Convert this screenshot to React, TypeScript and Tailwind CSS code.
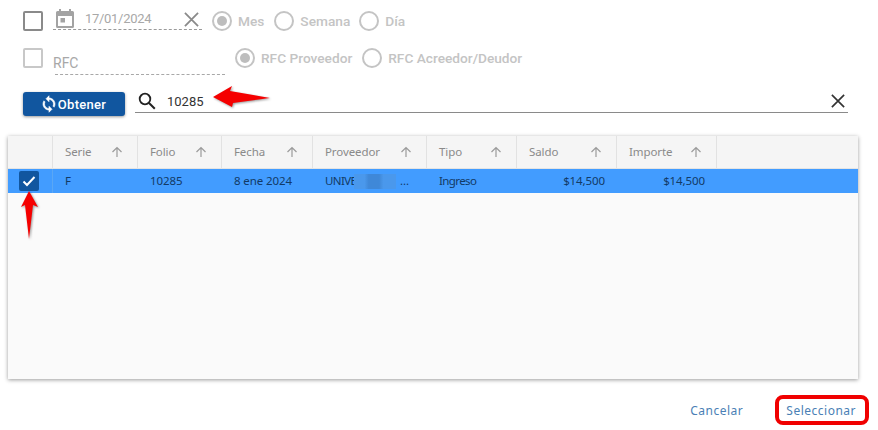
import React from "react";

const X = ({ c, s = 16 }: { c: string; s?: number }) => (
  <svg width={s} height={s} viewBox="0 0 16 16" className="shrink-0">
    <path d="M1 1L15 15M15 1L1 15" stroke={c} strokeWidth="1.9" fill="none" />
  </svg>
);

const Radio = ({ on, label, ml = "" }: { on?: boolean; label: string; ml?: string }) => (
  <div className={`flex items-center ${ml}`}>
    <span className="flex h-5 w-5 items-center justify-center rounded-full border-2 border-[#c4c4c4]">
      {on && <span className="h-[10px] w-[10px] rounded-full bg-[#bdbdbd]" />}
    </span>
    <span className="ml-[6px] -translate-y-[0.5px] text-[13.700px] font-medium leading-5 text-[#c4c4c4]">{label}</span>
  </div>
);

const cols: [string, string][] = [
  ["Serie", "w-[85px]"],
  ["Folio", "w-[84px]"],
  ["Fecha", "w-[91px]"],
  ["Proveedor", "w-[114px]"],
  ["Tipo", "w-[90px]"],
  ["Saldo", "w-[100px]"],
  ["Importe", "w-[100px]"],
];

const Up = () => (
  <svg width="12" height="12" viewBox="0 0 12 12" className="shrink-0">
    <path d="M6 11V1.500M1.500 6L6 1.500L10.500 6" stroke="#9b9b9b" strokeWidth="1.200" fill="none" />
  </svg>
);

const Cell = ({ w, right, children }: { w: string; right?: boolean; children: React.ReactNode }) => (
  <div className={`${w} flex items-center px-3 ${right ? "justify-end" : ""}`}>{children}</div>
);

export default function App() {
  return (
    <div className="relative h-[430px] w-[878px] overflow-hidden bg-white font-['Roboto',sans-serif]">
      <div className="flex h-[136px] flex-col pl-[23px] pr-[30px]">
        {/* row 1 */}
        <div className="mt-[11px] flex h-5 items-center">
          <span className="h-5 w-5 rounded-[2px] border-2 border-[#8a8a8a]" />
          <div className="ml-[10px] flex h-5 w-[149px] -translate-y-px items-center border-b border-dashed border-[#9a9a9a]">
            <svg width="18" height="20" viewBox="0 0 18 20" className="ml-[3px] -translate-y-[2px]">
              <path d="M3 1h2v2h8V1h2v2h1.500A1.500 1.500 0 0 1 18 4.500v14a1.500 1.500 0 0 1-1.500 1.500h-15A1.500 1.500 0 0 1 0 18.500v-14A1.500 1.500 0 0 1 1.500 3H3zM2 8v10h14V8z" fill="#a3a3a3" />
              <rect x="4.500" y="10" width="4.500" height="4.500" fill="#a3a3a3" />
            </svg>
            <span className="ml-[11px] -translate-y-px text-[13px] leading-5 tracking-[-0.3px] text-[#a8a8a8]">17/01/2024</span>
            <span className="ml-auto mr-[3px]">
              <X c="#8a8a8a" s={15} />
            </span>
          </div>
          <Radio on label="Mes" ml="ml-[10px]" />
          <Radio label="Semana" ml="ml-[10px]" />
          <Radio label="Día" ml="ml-[9px]" />
        </div>
        {/* row 2 */}
        <div className="mt-[17px] flex h-5 items-center">
          <span className="h-5 w-5 rounded-[2px] border-2 border-[#c8c8c8]" />
          <div className="ml-[12px] flex h-5 w-[170px] translate-y-[7px] items-center border-b border-dashed border-[#a8a8a8]">
            <span className="-ml-[2px] -translate-y-[2px] text-[14px] leading-5 text-[#a8a8a8]">RFC</span>
          </div>
          <Radio on label="RFC Proveedor" ml="ml-[10px]" />
          <Radio label="RFC Acreedor/Deudor" ml="ml-[10px]" />
        </div>
        {/* row 3 */}
        <div className="mt-[24px] flex h-6 items-center">
          <button className="flex h-6 w-[102px] items-center justify-center rounded-[3px] bg-[#11569f] text-[13px] font-medium leading-none tracking-[0.3px] text-white shadow-[0_1px_3px_rgba(0,0,0,0.4)]">
            <svg width="18" height="18" viewBox="0 0 24 24" className="-ml-[2px]">
              <path fill="#fff" stroke="#fff" strokeWidth="0.800" d="M12 4V1L8 5l4 4V6c3.310 0 6 2.690 6 6 0 1.010-.25 1.970-.7 2.800l1.460 1.460A7.930 7.930 0 0 0 20 12c0-4.420-3.580-8-8-8zm0 14c-3.310 0-6-2.690-6-6 0-1.010.25-1.970.7-2.800L5.240 7.740A7.930 7.930 0 0 0 4 12c0 4.420 3.580 8 8 8v3l4-4-4-4v3z" />
            </svg>
            Obtener
          </button>
          <div className="ml-[10px] flex h-5 w-[713px] -translate-y-px items-center border-b border-[#8a8a8a]">
            <svg width="18" height="18" viewBox="0 0 18 18" className="ml-[3px] -translate-y-[2px]">
              <circle cx="7" cy="7" r="5.300" stroke="#222" strokeWidth="1.800" fill="none" />
              <path d="M11 11L16.800 16.800" stroke="#222" strokeWidth="2" fill="none" />
            </svg>
            <span className="ml-[11px] -translate-y-[1.500px] text-[13px] leading-5 text-[#333]">10285</span>
            <span className="ml-auto mr-[3px] -translate-y-[2px]">
              <X c="#333" s={14} />
            </span>
          </div>
        </div>
      </div>

      {/* table */}
      <div className="ml-2 flex h-[243px] w-[850px] flex-col bg-[#fafafa] font-['Noto_Sans',sans-serif] text-[11.500px] tracking-[-0.1px] shadow-[0_1px_4px_rgba(0,0,0,0.4)]">
        <div className="flex h-[33px] border-b border-[#e4e4e4] bg-[#f5f5f5] text-[#8a8a8a]">
          <div className="w-[45px] border-r border-[#e2e2e2]" />
          {cols.map(([name, w]) => (
            <div key={name} className={`${w} flex items-center justify-between border-r border-[#e2e2e2] pl-3 pr-[14px]`}>
              <span>{name}</span>
              <Up />
            </div>
          ))}
        </div>
        <div className="flex h-6 bg-[#429cff] text-[#123a66]">
          <div className="flex w-[45px] items-center justify-center border-r border-[#5aa7f5]">
            <span className="-ml-[2px] flex h-5 w-5 items-center justify-center rounded-[2px] bg-[#11569f]">
              <svg width="14" height="12" viewBox="0 0 14 12">
                <path d="M1.500 6.500L5 10L12.500 2" stroke="#fff" strokeWidth="2" fill="none" />
              </svg>
            </span>
          </div>
          <Cell w="w-[85px]">F</Cell>
          <Cell w="w-[84px]">10285</Cell>
          <Cell w="w-[91px]">8 ene 2024</Cell>
          <Cell w="w-[114px]">
            <span className="w-[29px] whitespace-nowrap tracking-[-0.6px]">UNIVE</span>
            <span className="h-[15px] w-[42px] shrink-0 bg-[linear-gradient(90deg,#4a98ec,#4a98ec_25%,#3f88d8_35%,#3f88d8_60%,#4a98ec_70%,#4a98ec)]" />
            <span className="ml-[4px]">...</span>
          </Cell>
          <Cell w="w-[90px]"><span className="tracking-[-0.6px]">Ingreso</span></Cell>
          <Cell w="w-[100px]" right>$14,500</Cell>
          <Cell w="w-[100px]" right>$14,500</Cell>
        </div>
      </div>

      {/* footer */}
      <div className="mt-[22px] flex h-5 items-center justify-end pr-[22px] font-['Noto_Sans',sans-serif] text-[12px] tracking-[0.5px] text-[#4a7fb5]">
        <span>Cancelar</span>
        <span className="ml-[43px]">Seleccionar</span>
      </div>

      {/* red annotations */}
      <span className="absolute left-[775px] top-[395px] h-[30px] w-[94px] rounded-[8px] border-[4px] border-[#f00000]" />
      <svg width="62" height="26" viewBox="0 0 62 26" className="absolute left-[212px] top-[85px] drop-shadow-[1px_1px_1px_rgba(0,0,0,0.4)]">
        <path d="M1 12L20 1L18 6L58 13L21 18L20 22Z" fill="#f50000" />
      </svg>
      <svg width="20" height="52" viewBox="0 0 20 52" className="absolute left-[20px] top-[189px] drop-shadow-[1px_1px_1px_rgba(0,0,0,0.4)]">
        <path d="M9 2L18 18L13 16L9 50L5 16L1 18Z" fill="#f50000" />
      </svg>
    </div>
  );
}
